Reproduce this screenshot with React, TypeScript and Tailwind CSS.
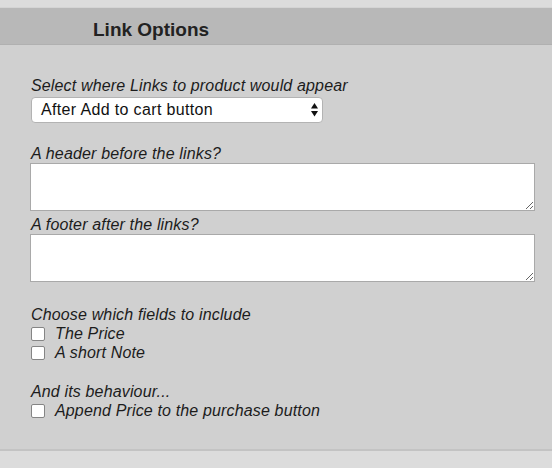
import React from "react";

function Check({ label }: { label: string }) {
  return (
    <div className="flex h-[19px] items-center">
      <span className="box-border block h-[14px] w-[14px] rounded-[2px] border border-[#858585] bg-white" />
      <span className="ml-[10px] text-[16px] italic leading-[19px] tracking-[0.15px] text-[#1c1c1c]">{label}</span>
    </div>
  );
}

export default function App() {
  return (
    <div
      className="h-[468px] w-[552px] overflow-hidden bg-[#dcdcdc]"
      style={{ fontFamily: '"Liberation Sans", Arial, sans-serif' }}
    >
      <div className="h-[8px] border-b border-[#d4d4d4] bg-[#dcdcdc]" />
      <div className="box-border flex h-[37px] items-center border-b border-[#b0b0b0] bg-[#b8b8b8] pl-[93px] pt-[6px]">
        <span className="text-[19px] font-bold leading-none text-[#222]">Link Options</span>
      </div>
      <div className="box-border h-[406px] border-b-2 border-[#c3c3c3] bg-[#d0d0d0] pl-[31px] pr-[17px] pt-[31px] text-[#1c1c1c]">
        <div className="text-[16px] italic leading-[19px] tracking-[0.15px]">Select where Links to product would appear</div>
        <div className="relative mt-[2px] h-[26px] w-[292px]">
          <div className="box-border flex h-[26px] w-[292px] items-center rounded-[4px] border border-[#b3b3b3] bg-white pl-[9px] text-[16px] tracking-[0.35px] text-[#111]">
            After Add to cart button
          </div>
          <svg className="absolute right-[5px] top-[5px]" width="7" height="16" viewBox="0 0 7 16">
            <path d="M3.5 1 L7 6.5 L0 6.5 Z" fill="#111" />
            <path d="M0 9 L7 9 L3.5 14.5 Z" fill="#111" />
          </svg>
        </div>
        <div className="mt-[21px] text-[16px] italic leading-[19px] tracking-[0.15px]">A header before the links?</div>
        <textarea className="-ml-[1px] mt-0 box-border block h-[48px] w-[505px] border border-[#a9a9a9] bg-white outline-none" />
        <div className="mt-[4px] text-[16px] italic leading-[19px] tracking-[0.15px]">A footer after the links?</div>
        <textarea className="-ml-[1px] mt-0 box-border block h-[48px] w-[505px] border border-[#a9a9a9] bg-white outline-none" />
        <div className="mt-[23px] text-[16px] italic leading-[19px] tracking-[0.15px]">Choose which fields to include</div>
        <Check label="The Price" />
        <Check label="A short Note" />
        <div className="mt-[20px] text-[16px] italic leading-[19px] tracking-[0.15px]">And its behaviour...</div>
        <Check label="Append Price to the purchase button" />
      </div>
    </div>
  );
}
